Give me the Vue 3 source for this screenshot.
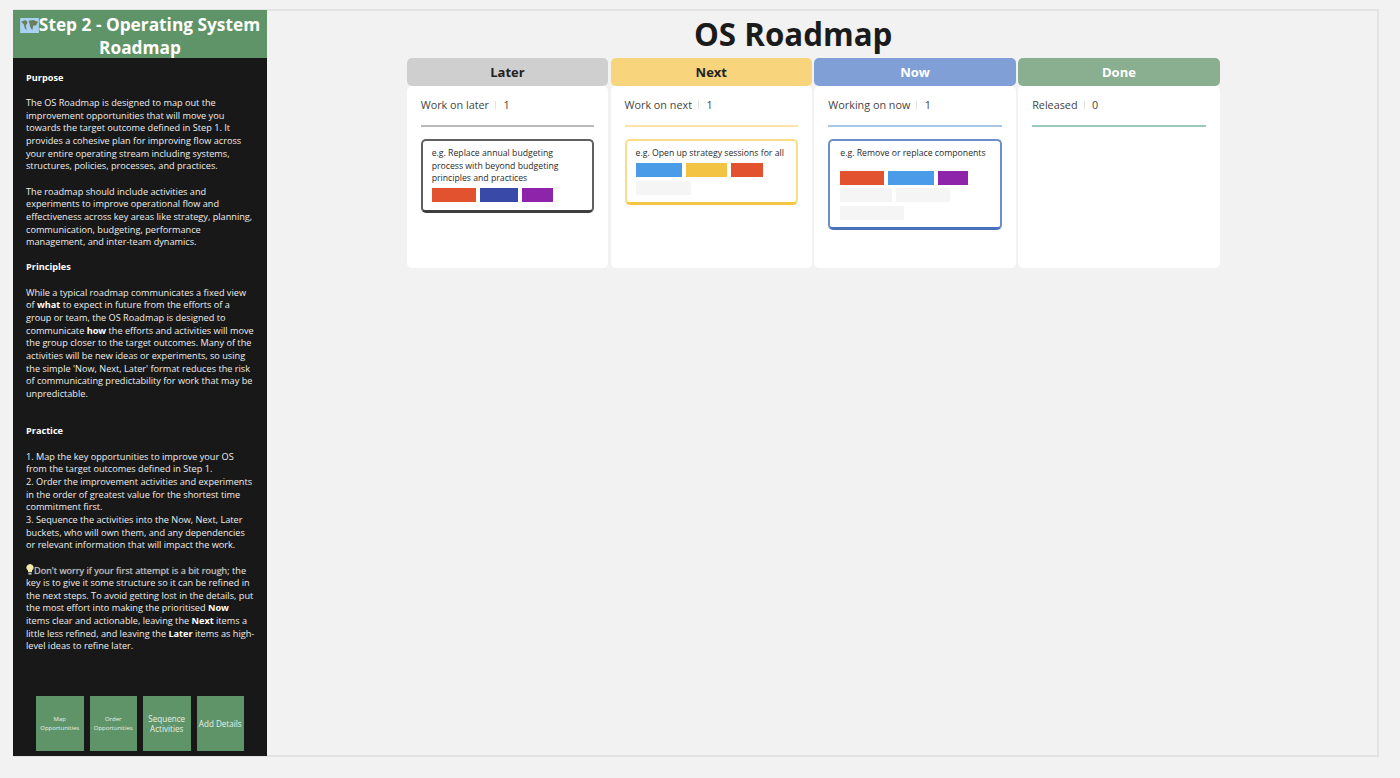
<script setup>
const columns = [
  { key: 'later', title: 'Later', label: 'Work on later', count: 1, cards: [
    { text: ['e.g. Replace annual budgeting', 'process with beyond budgeting', 'principles and practices'], tone: 'dark', gap: false,
      rows: [[['#e2522f', 44], ['#3949a8', 38], ['#8e24aa', 31]]] } ] },
  { key: 'next', title: 'Next', label: 'Work on next', count: 1, cards: [
    { text: ['e.g. Open up strategy sessions for all'], tone: 'yellow', gap: false,
      rows: [[['#4a9be8', 46], ['#f3c443', 41], ['#e2522f', 32]], [['#f5f5f5', 55]]] } ] },
  { key: 'now', title: 'Now', label: 'Working on now', count: 1, cards: [
    { text: ['e.g. Remove or replace components'], tone: 'blue', gap: true,
      rows: [[['#e2522f', 44], ['#4a9be8', 46], ['#8e24aa', 30]], [['#f5f5f5', 52], ['#f5f5f5', 54]], [['#f5f5f5', 64]]] } ] },
  { key: 'done', title: 'Done', label: 'Released', count: 0, cards: [] }
]
</script>

<template>
  <div class="page">
    <div class="frame">
      <aside class="side">
        <header class="side-head">
          <svg class="map" viewBox="0 0 20 16" width="19" height="15">
            <rect width="20" height="16" fill="#a8d2f0" />
            <path d="M1 4l5-2 2 3-2 3 1 5-2-2-1-4zM9 3l5-1 5 2-2 4-3 0-1 5-2-3-1-4z" fill="#6b7d5e" />
          </svg>Step 2 - Operating System<br />Roadmap
        </header>
        <div class="side-body">
          <h4>Purpose</h4>
          <p>The OS Roadmap is designed to map out the<br />improvement opportunities that will move you<br />towards the target outcome defined in Step 1. It<br />provides a cohesive plan for improving flow across<br />your entire operating stream including systems,<br />structures, policies, processes, and practices.</p>
          <p>The roadmap should include activities and<br />experiments to improve operational flow and<br />effectiveness across key areas like strategy, planning,<br />communication, budgeting, performance<br />management, and inter-team dynamics.</p>
          <h4>Principles</h4>
          <p>While a typical roadmap communicates a fixed view<br />of <b>what</b> to expect in future from the efforts of a<br />group or team, the OS Roadmap is designed to<br />communicate <b>how</b> the efforts and activities will move<br />the group closer to the target outcomes. Many of the<br />activities will be new ideas or experiments, so using<br />the simple 'Now, Next, Later' format reduces the risk<br />of communicating predictability for work that may be<br />unpredictable.</p>
          <h4 class="practice">Practice</h4>
          <p class="steps">1. Map the key opportunities to improve your OS<br />from the target outcomes defined in Step 1.<br />2. Order the improvement activities and experiments<br />in the order of greatest value for the shortest time<br />commitment first.<br />3. Sequence the activities into the Now, Next, Later<br />buckets, who will own them, and any dependencies<br />or relevant information that will impact the work.</p>
          <p>
            <svg class="bulb" viewBox="0 0 8 11" width="8" height="11">
              <path d="M4 0a3.6 3.6 0 0 1 2 6.6V8H2V6.6A3.6 3.6 0 0 1 4 0z" fill="#f5e9a8" />
              <rect x="2.4" y="8.6" width="3.2" height="2" fill="#bbb" />
            </svg><span class="hl">Don't worry if your first attempt is a bit rough;</span> the<br />key is to give it some structure so it can be refined in<br />the next steps. To avoid getting lost in the details, put<br />the most effort into making the prioritised <b>Now</b><br />items clear and actionable, leaving the <b>Next</b> items a<br />little less refined, and leaving the <b>Later</b> items as high-<br />level ideas to refine later.
          </p>
          <div class="side-btns">
            <div class="btn tiny">Map<br />Opportunities</div>
            <div class="btn tiny">Order<br />Opportunities</div>
            <div class="btn mid">Sequence<br />Activities</div>
            <div class="btn mid">Add Details</div>
          </div>
        </div>
      </aside>
      <main class="main">
        <h1 class="title">OS Roadmap</h1>
        <section class="board">
          <div v-for="col in columns" :key="col.key" class="col" :class="col.key">
            <div class="col-head">{{ col.title }}</div>
            <div class="col-body">
              <div class="col-meta">
                <span>{{ col.label }}</span><i class="sep"></i><span>{{ col.count }}</span>
              </div>
              <div class="rule"></div>
              <div v-for="(card, i) in col.cards" :key="i" class="card" :class="[card.tone, { spaced: card.gap }]">
                <div class="card-text">
                  <div v-for="line in card.text" :key="line">{{ line }}</div>
                </div>
                <div v-for="(row, r) in card.rows" :key="r" class="tags">
                  <span v-for="(tag, t) in row" :key="t" class="tag" :style="{ background: tag[0], width: tag[1] + 'px' }"></span>
                </div>
              </div>
            </div>
          </div>
        </section>
      </main>
    </div>
  </div>
</template>

<style scoped>
.page {
  height: 778px;
  box-sizing: border-box;
  padding: 9px 21px 21px 13px;
  background: #f2f2f2;
  font-family: "Open Sans", "Liberation Sans", sans-serif;
  color: #222;
}
.frame {
  height: 100%;
  display: flex;
  box-sizing: border-box;
  border: 2px solid #e3e3e3;
  border-left: 0;
  background: #f2f2f2;
}
.side {
  width: 254px;
  margin-top: -1px;
  margin-bottom: -1px;
  flex: none;
  display: flex;
  flex-direction: column;
  background: #181818;
  color: #eeeeee;
}
.side-head {
  height: 48px;
  flex: none;
  box-sizing: border-box;
  padding-top: 3px;
  background: #5f9468;
  color: #fff;
  font-size: 17.3px;
  font-weight: 700;
  line-height: 23px;
  text-align: center;
  white-space: nowrap;
  overflow: hidden;
}
.map { vertical-align: -2px; }
.side-body {
  flex: 1;
  display: flex;
  flex-direction: column;
  padding: 13.7px 13px 5px;
  font-size: 9.17px;
  line-height: 12.65px;
  white-space: nowrap;
}
.side-body h4 {
  margin: 0 0 12.65px;
  font-size: 9.17px;
  line-height: 12.65px;
  font-weight: 700;
  color: #fff;
}
.side-body p { margin: 0 0 12.65px; }
.side-body .practice { margin-top: 12px; }
.side-body .steps { margin-bottom: 11.65px; }
.side-body b { color: #fff; font-weight: 700; }
.bulb { vertical-align: -1px; }
.hl { color: #c4c4c4; text-shadow: 0 0 1px #999; }
.side-btns {
  margin-top: auto;
  align-self: center;
  display: flex;
  gap: 6px;
}
.btn {
  width: 47.5px;
  height: 55px;
  display: flex;
  align-items: center;
  justify-content: center;
  text-align: center;
  background: #5f9468;
  color: #e8f0e8;
}
.btn.tiny { font-size: 6px; line-height: 9px; }
.btn.mid { font-size: 8.1px; line-height: 10px; }
.main {
  flex: 1;
  display: flex;
  flex-direction: column;
  padding-left: 139.7px;
}
.title {
  margin: 3px 0 3px;
  height: 41px;
  width: 773px;
  text-align: center;
  font-size: 31.3px;
  line-height: 41px;
  font-weight: 700;
  color: #1b1b1b;
}
.board {
  display: flex;
  gap: 2.3px;
  width: 813px;
}
.col { flex: 1; }
.col-head {
  height: 28px;
  border-radius: 5px;
  text-align: center;
  font-size: 13px;
  font-weight: 700;
  line-height: 28px;
}
.later .col-head { background: #cfcfcf; color: #222; }
.next .col-head { background: #f8d47c; color: #222; }
.now .col-head { background: #7f9fd6; color: #fff; }
.done .col-head { background: #8aae90; color: #fff; }
.col-body {
  height: 182px;
  box-sizing: border-box;
  padding: 0 14px;
  background: #fff;
  border-radius: 5px;
}
.col-meta {
  height: 39px;
  padding-bottom: 2px;
  box-sizing: border-box;
  display: flex;
  align-items: center;
  font-size: 10.8px;
  color: #444;
}
.sep {
  width: 1px;
  height: 8px;
  margin: 0 7.5px 0 6px;
  background: #e2e2e2;
}
.rule { height: 2px; margin-bottom: 12px; }
.later .rule { background: #b9b9b9; }
.next .rule { background: #fbe4a6; }
.now .rule { background: #a9c6e4; }
.done .rule { background: #9bc8b8; }
.card {
  box-sizing: border-box;
  padding: 6px 10px 8px 9px;
  border: 2px solid;
  border-bottom-width: 3px;
  border-radius: 5px;
  background: #fff;
}
.card.dark { border-color: #606060; border-bottom-color: #3f3f3f; height: 74px; }
.card.yellow { border-color: #fbdc8a; border-bottom-color: #f5c645; height: 66px; }
.card.blue { border-color: #6c8ecb; border-bottom-color: #4a72ba; height: 91px; }
.card.blue { padding-left: 10px; }
.card-text {
  font-size: 8.7px;
  line-height: 12.6px;
  color: #2a2a2a;
  white-space: nowrap;
}
.tags {
  display: flex;
  gap: 4px;
  margin-top: 4px;
}
.tags:nth-child(2) { margin-top: 3px; }
.spaced .tags:nth-child(2) { margin-top: 11.5px; }
.spaced .tags:nth-child(3) { margin-top: 3px; }
.spaced .tags:nth-child(4) { margin-top: 4px; }
.tag { height: 14px; flex: none; }
</style>

<style>
html, body { margin: 0; background: #f2f2f2; }
</style>
